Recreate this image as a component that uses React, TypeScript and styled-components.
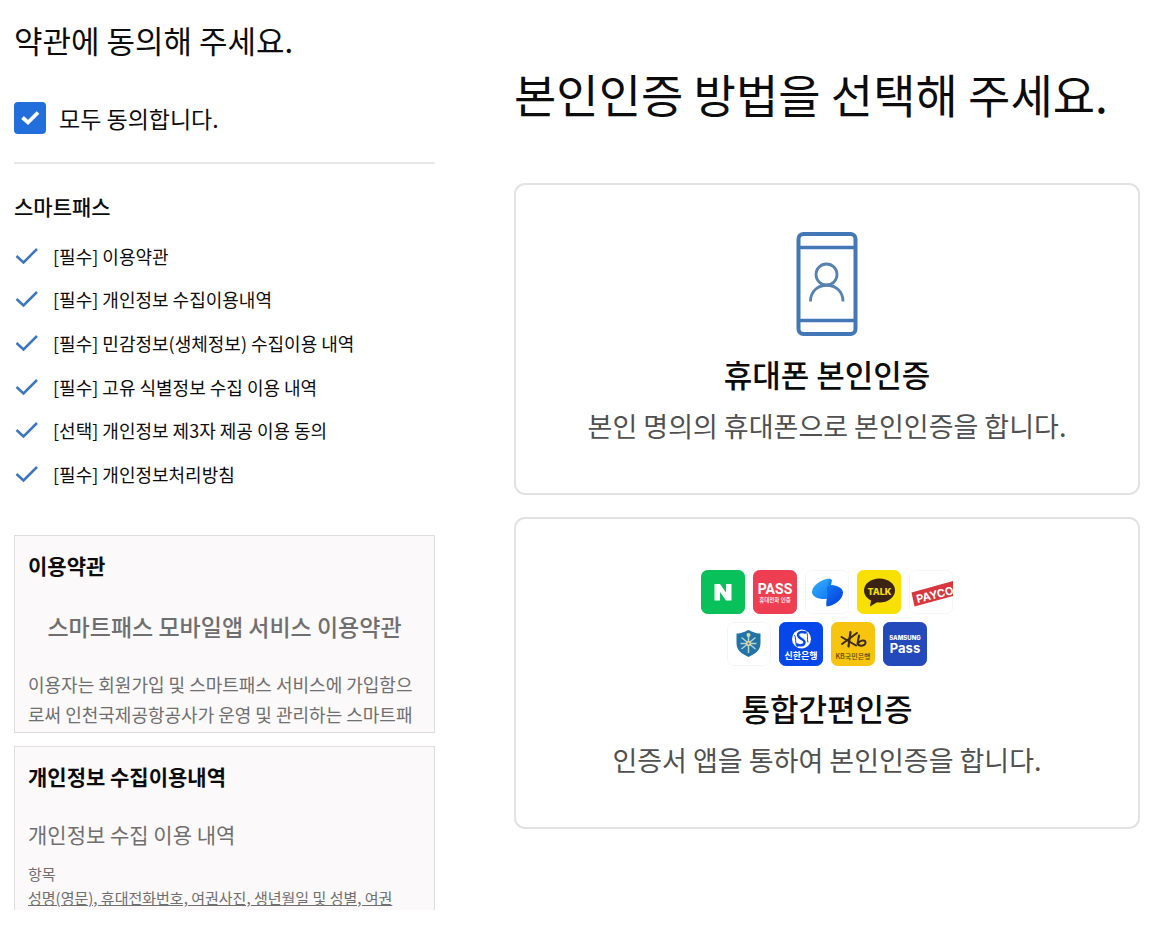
import React from "react";
import styled, { createGlobalStyle } from "styled-components";

const GlobalStyle = createGlobalStyle`
  *, *::before, *::after { box-sizing: border-box; }
  body {
    margin: 0;
    background: #fff;
    color: #0c0c0c;
    font-family: "Noto Sans CJK KR", "Noto Sans", sans-serif;
  }
  h1, h2, h3, p, ul { margin: 0; padding: 0; font-weight: 400; }
`;

const Page = styled.main`
  display: grid;
  grid-template-columns: minmax(0, 421fr) minmax(0, 626fr);
  column-gap: 79px;
  align-items: start;
  padding: 0 17px 0 14px;
`;

const TermsColumn = styled.section`
  padding-top: 16px;
`;

const TermsHeading = styled.h1`
  font-size: 31px;
  line-height: 48px;
`;

const AgreeAll = styled.label`
  display: flex;
  align-items: center;
  gap: 13px;
  margin-top: 38px;
  padding-bottom: 28px;
  border-bottom: 2px solid #e8e8e8;
  font-size: 23px;
  line-height: 32px;
  cursor: pointer;
`;

const CheckCell = styled.span<{ $size: number }>`
  display: grid;
  flex: none;
  width: ${(p) => p.$size}px;
  height: ${(p) => p.$size}px;
  place-items: center;

  & > * {
    grid-area: 1 / 1;
  }

  svg {
    pointer-events: none;
  }

  input:not(:checked) + svg {
    opacity: 0.25;
  }
`;

const BoxInput = styled.input`
  appearance: none;
  width: 100%;
  height: 100%;
  margin: 0;
  border-radius: 4px;
  background: #b8bec8;

  &:checked {
    background: #226fdc;
  }
`;

const PlainInput = styled.input`
  appearance: none;
  width: 100%;
  height: 100%;
  margin: 0;
`;

const GroupTitle = styled.h2`
  margin-top: 27px;
  font-size: 21px;
  font-weight: 500;
  line-height: 30px;
`;

const TermList = styled.ul`
  display: grid;
  grid-auto-rows: 1fr;
  height: 262px;
  margin-top: 13px;
  list-style: none;
`;

const TermItem = styled.li`
  display: flex;
  align-items: center;
`;

const TermLabel = styled.label`
  display: flex;
  align-items: center;
  gap: 15px;
  font-size: 18px;
  line-height: 28px;
  cursor: pointer;
`;

const TermsPanels = styled.div`
  display: grid;
  gap: 13px;
  margin-top: 39px;
`;

const Panel = styled.article<{ $height: number; $cut?: boolean }>`
  height: ${(p) => p.$height}px;
  overflow: hidden;
  padding: 14px 13px 0;
  border: 1px solid #dedede;
  border-bottom-width: ${(p) => (p.$cut ? 0 : 1)}px;
  background: #fbf9fa;
  color: #6f6f6f;
`;

const PanelTitle = styled.h2`
  color: #0c0c0c;
  font-size: 21px;
  font-weight: 700;
  line-height: 30px;
`;

const DocumentTitle = styled.h3`
  margin-top: 28px;
  font-size: 23px;
  font-weight: 500;
  line-height: 36px;
  text-align: center;
  white-space: nowrap;
`;

const DocumentSubtitle = styled.h3`
  margin-top: 28px;
  font-size: 21px;
  line-height: 30px;
`;

const Paragraph = styled.p`
  margin-top: 25px;
  font-size: 18px;
  line-height: 30px;
  word-break: break-all;
`;

const Details = styled.div`
  margin-top: 13px;
  font-size: 15px;
  line-height: 24px;
`;

const Underlined = styled.p`
  text-decoration: underline;
  white-space: nowrap;
`;

const MethodColumn = styled.section`
  padding-top: 61px;
`;

const MethodHeading = styled.h1`
  font-size: 46px;
  line-height: 64px;
  white-space: nowrap;
`;

const MethodList = styled.div`
  display: grid;
  gap: 22px;
  margin-top: 58px;
`;

const MethodCard = styled.button`
  display: flex;
  flex-direction: column;
  align-items: center;
  width: 100%;
  padding: 46px 20px 47px;
  border: 2px solid #e2e2e2;
  border-radius: 11px;
  background: #fff;
  color: inherit;
  font-family: inherit;
  cursor: pointer;
`;

const Artwork = styled.span`
  display: flex;
  flex-direction: column;
  align-items: center;
  justify-content: center;
  gap: 8px;
  height: 106px;
`;

const LogoRow = styled.span`
  display: flex;
  gap: 8px;
`;

const MethodName = styled.span`
  margin-top: 15px;
  font-size: 31px;
  font-weight: 500;
  line-height: 44px;
`;

const MethodText = styled.span`
  margin-top: 10px;
  color: #505050;
  font-size: 27px;
  line-height: 40px;
  white-space: nowrap;
`;

const LogoSvg = styled.svg`
  display: block;
  width: 44px;
  height: 44px;
`;

const PhoneIcon = () => (
  <svg width="62" height="104" viewBox="0 0 62 104" fill="none" stroke="#4377b5" aria-hidden="true">
    <rect x="2.500" y="2" width="57" height="100" rx="5" strokeWidth="4" />
    <path d="M2 15.500H60M2 88.500H60" strokeWidth="3.400" />
    <circle cx="30.500" cy="42.500" r="10.500" stroke="#5682b0" strokeWidth="2.800" />
    <path d="M14.500 69.500C14.500 47.800 47 47.800 47 69.500" stroke="#5682b0" strokeWidth="2.800" />
  </svg>
);

const Tile = ({ name, fill, edge, children }: { name: string; fill: string; edge?: string; children: React.ReactNode }) => (
  <LogoSvg viewBox="0 0 44 44" role="img" aria-label={name}>
    <rect x="0.5" y="0.5" width="43" height="43" rx="6" fill={fill} stroke={edge ?? fill} />
    {children}
  </LogoSvg>
);

const sans = "Inter, 'Noto Sans CJK KR', sans-serif";
const korean = "'Noto Sans CJK KR', sans-serif";

const NaverLogo = () => (
  <Tile name="네이버" fill="#09c15b">
    <path d="M13.500 14H19L25 22.500V14H30.500V30.500H25L19 22V30.500H13.500Z" fill="#fff" />
  </Tile>
);

const PassLogo = () => (
  <Tile name="PASS" fill="#ee3f52">
    <text x="22" y="23.500" textAnchor="middle" fontFamily="Roboto, sans-serif" fontWeight="700" fontSize="14" fill="#fff">PASS</text>
    <text x="22" y="32" textAnchor="middle" fontFamily={korean} fontWeight="500" fontSize="5.500" fill="#fff">휴대전화 인증</text>
  </Tile>
);

const TossLogo = () => (
  <Tile name="토스" fill="#fff" edge="#f5f5f5">
    <defs>
      <linearGradient id="tossLeft" x1="0" y1="0" x2="0.6" y2="1">
        <stop offset="0" stopColor="#35aff8" />
        <stop offset="1" stopColor="#1681f4" />
      </linearGradient>
      <linearGradient id="tossRight" x1="0" y1="0" x2="0.6" y2="1">
        <stop offset="0" stopColor="#1681f5" />
        <stop offset="1" stopColor="#0646e0" />
      </linearGradient>
    </defs>
    <path d="M24.500 8.500C16 9.500 7 15.500 7 22C7 26.500 12.500 29.500 21.500 29L26 18Z" fill="url(#tossLeft)" />
    <path d="M24.500 8.500C26 12 20.500 17 22 21C23.500 25 20.500 30 21.500 36.500C29.500 35.500 38 29.500 38 22.500C38 18.500 33 15.500 26 15Z" fill="url(#tossRight)" />
    <path d="M24.500 8.500L27 10L26 15.500L22.500 17Z" fill="#1681f5" />
  </Tile>
);

const KakaoLogo = () => (
  <Tile name="카카오톡" fill="#f8e005">
    <ellipse cx="22.500" cy="20.500" rx="15.500" ry="12" fill="#3b2314" />
    <path d="M14.500 28L13 36.500L22 31Z" fill="#3b2314" />
    <text x="22.500" y="24.500" textAnchor="middle" fontFamily={sans} fontWeight="800" fontSize="9" fill="#f8e005">TALK</text>
  </Tile>
);

const PaycoLogo = () => (
  <Tile name="PAYCO" fill="#fff" edge="#f5f5f5">
    <path d="M2.500 22.500L44 11V26L5.500 36.500Z" fill="#d8373d" />
    <text x="8.500" y="33" transform="rotate(-14 8.500 33)" fontFamily={sans} fontWeight="700" fontSize="11" fill="#fff">PAYCO</text>
  </Tile>
);

const ShieldLogo = () => (
  <Tile name="공동인증서" fill="#fff" edge="#f5f5f5">
    <path d="M9.500 11.500C15 11.500 18 9.500 21.500 8C25 9.500 28 11.500 33.500 11.500V21C33.500 28.500 28 32 21.500 35C15 32 9.500 28.500 9.500 21Z" fill="#2273a8" />
    <path d="M21.500 11V31M14.500 15.500L28.500 27M28.500 15.500L14.500 27M13.500 21.500H29.500" stroke="#b6d5c7" strokeWidth="1.500" />
    <circle cx="21.500" cy="13" r="2" fill="#d5d9a7" />
    <circle cx="21.500" cy="21.500" r="2.500" fill="#e5d89c" />
    <circle cx="21.500" cy="21.500" r="1" fill="#2273a8" />
  </Tile>
);

const ShinhanLogo = () => (
  <Tile name="신한은행" fill="#0647e9">
    <circle cx="22.500" cy="17" r="9.500" fill="#fff" />
    <path d="M27 11C22 8.500 17.500 11 19.500 14.500C21.500 17.500 26 17.500 25.500 20.500C25 24 20 24 17 22" fill="none" stroke="#0647e9" strokeWidth="2.400" />
    <path d="M26.500 9C30 13 27.500 16 29 20.500M15.500 13C17.500 17 15.500 20 18.500 25" fill="none" stroke="#0647e9" strokeWidth="1" />
    <text x="22" y="36.500" textAnchor="middle" fontFamily={korean} fontWeight="700" fontSize="9" fill="#fff">신한은행</text>
  </Tile>
);

const KbLogo = () => (
  <Tile name="KB국민은행" fill="#f7c50f">
    <g fill="none" stroke="#3c2c16" strokeLinecap="round">
      <path d="M19.500 10L17.500 24.500" strokeWidth="2.200" />
      <path d="M10.500 15L25 23.500M26 11L11 22" strokeWidth="2" />
      <path d="M28 13.500L26.500 22C29 25 35 23.500 34.500 20C34 17.500 29 18 27 21.500" strokeWidth="2" />
    </g>
    <text x="22" y="36.500" textAnchor="middle" fontFamily={korean} fontWeight="500" fontSize="7" fill="#5b4614">KB국민은행</text>
  </Tile>
);

const SamsungLogo = () => (
  <Tile name="삼성패스" fill="#2349ba">
    <text x="22" y="18" textAnchor="middle" fontFamily={sans} fontWeight="800" fontSize="6" fill="#fff">SAMSUNG</text>
    <text x="22" y="30.500" textAnchor="middle" fontFamily={sans} fontWeight="700" fontSize="13" fill="#fff">Pass</text>
  </Tile>
);

const terms = [
  "[필수] 이용약관",
  "[필수] 개인정보 수집이용내역",
  "[필수] 민감정보(생체정보) 수집이용 내역",
  "[필수] 고유 식별정보 수집 이용 내역",
  "[선택] 개인정보 제3자 제공 이용 동의",
  "[필수] 개인정보처리방침",
];

export default function App() {
  const [agreed, setAgreed] = React.useState<boolean[]>(terms.map(() => true));
  const toggle = (index: number) => setAgreed(agreed.map((value, i) => (i === index ? !value : value)));

  return (
    <>
      <GlobalStyle />
      <Page>
        <TermsColumn>
          <TermsHeading>약관에 동의해 주세요.</TermsHeading>
          <AgreeAll>
            <CheckCell $size={32}>
              <BoxInput
                type="checkbox"
                checked={agreed.every(Boolean)}
                onChange={(e) => setAgreed(terms.map(() => e.target.checked))}
              />
              <svg width="32" height="32" viewBox="0 0 32 32" fill="none" aria-hidden="true">
                <path d="M8.500 15.500L14 20.500L24 10.500" stroke="#fff" strokeWidth="3.800" />
              </svg>
            </CheckCell>
            모두 동의합니다.
          </AgreeAll>

          <GroupTitle>스마트패스</GroupTitle>
          <TermList>
            {terms.map((term, index) => (
              <TermItem key={term}>
                <TermLabel>
                  <CheckCell $size={24}>
                    <PlainInput type="checkbox" checked={agreed[index]} onChange={() => toggle(index)} />
                    <svg width="24" height="24" viewBox="0 0 24 24" fill="none" aria-hidden="true">
                      <path d="M2.500 12L9.500 18.500L23 5" stroke="#3d76bd" strokeWidth="2.500" />
                    </svg>
                  </CheckCell>
                  {term}
                </TermLabel>
              </TermItem>
            ))}
          </TermList>

          <TermsPanels>
            <Panel $height={198}>
              <PanelTitle>이용약관</PanelTitle>
              <DocumentTitle>스마트패스 모바일앱 서비스 이용약관</DocumentTitle>
              <Paragraph>이용자는 회원가입 및 스마트패스 서비스에 가입함으로써 인천국제공항공사가 운영 및 관리하는 스마트패</Paragraph>
            </Panel>
            <Panel $height={164} $cut>
              <PanelTitle>개인정보 수집이용내역</PanelTitle>
              <DocumentSubtitle>개인정보 수집 이용 내역</DocumentSubtitle>
              <Details>
                <p>항목</p>
                <Underlined>성명(영문), 휴대전화번호, 여권사진, 생년월일 및 성별, 여권</Underlined>
              </Details>
            </Panel>
          </TermsPanels>
        </TermsColumn>

        <MethodColumn>
          <MethodHeading>본인인증 방법을 선택해 주세요.</MethodHeading>
          <MethodList>
            <MethodCard type="button">
              <Artwork>
                <PhoneIcon />
              </Artwork>
              <MethodName>휴대폰 본인인증</MethodName>
              <MethodText>본인 명의의 휴대폰으로 본인인증을 합니다.</MethodText>
            </MethodCard>
            <MethodCard type="button">
              <Artwork>
                <LogoRow>
                  <NaverLogo />
                  <PassLogo />
                  <TossLogo />
                  <KakaoLogo />
                  <PaycoLogo />
                </LogoRow>
                <LogoRow>
                  <ShieldLogo />
                  <ShinhanLogo />
                  <KbLogo />
                  <SamsungLogo />
                </LogoRow>
              </Artwork>
              <MethodName>통합간편인증</MethodName>
              <MethodText>인증서 앱을 통하여 본인인증을 합니다.</MethodText>
            </MethodCard>
          </MethodList>
        </MethodColumn>
      </Page>
    </>
  );
}
